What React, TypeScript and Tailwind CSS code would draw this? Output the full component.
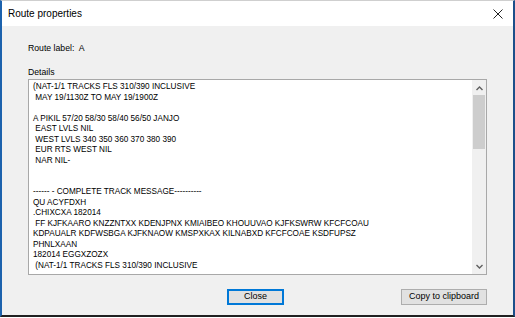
import React from "react";

const lines = [
  "(NAT-1/1 TRACKS FLS 310/390 INCLUSIVE",
  " MAY 19/1130Z TO MAY 19/1900Z",
  "",
  "A PIKIL 57/20 58/30 58/40 56/50 JANJO",
  " EAST LVLS NIL",
  " WEST LVLS 340 350 360 370 380 390",
  " EUR RTS WEST NIL",
  " NAR NIL-",
  "",
  "",
  "------ - COMPLETE TRACK MESSAGE----------",
  "QU ACYFDXH",
  ".CHIXCXA 182014",
  " FF KJFKAARO KNZZNTXX KDENJPNX KMIAIBEO KHOUUVAO KJFKSWRW KFCFCOAU",
  "KDPAUALR KDFWSBGA KJFKNAOW KMSPXKAX KILNABXD KFCFCOAE KSDFUPSZ",
  "PHNLXAAN",
  "182014 EGGXZOZX",
  " (NAT-1/1 TRACKS FLS 310/390 INCLUSIVE",
];

export default function App() {
  return (
    <div className="w-[515px] h-[318px] bg-white" style={{ fontFamily: '"Liberation Sans", Arial, sans-serif' }}>
      <div className="w-[515px] h-[317px] flex flex-col border-t border-t-[#cfcfcf] border-l-2 border-l-[#1c62ad] border-r-2 border-r-[#1c4f8a] border-b-2 border-b-[#202020] bg-[#f0f0f0]">
        {/* Title bar */}
        <div className="h-[25px] bg-white flex items-center justify-between pl-[6px] pr-[10px] shrink-0">
          <span className="text-[10px] text-[#000] leading-none">Route properties</span>
          <svg width="10" height="10" viewBox="0 0 10 10" className="mt-[1px]">
            <path d="M0.5 0.5 L9.5 9.5 M9.5 0.5 L0.5 9.5" stroke="#222" strokeWidth="1" />
          </svg>
        </div>
        {/* Content */}
        <div className="flex flex-col pl-[26px] pt-[17px]">
          <div className="text-[8.7px] leading-[11px] text-[#000] whitespace-pre">Route label:  A</div>
          <div className="text-[8.7px] leading-[11px] text-[#000] mt-[13px]">Details</div>
          <div className="mt-[1px] w-[459px] h-[196px] border border-[#a8a8a8] bg-white flex">
            <div className="flex-1 pl-[4px] pt-[2px] overflow-hidden">
              {lines.map((l, i) => (
                <div key={i} className="text-[8.2px] leading-[10.5px] h-[10.5px] text-[#000] whitespace-pre">
                  {l}
                </div>
              ))}
            </div>
            <div className="w-[14px] bg-[#f0f0f0] flex flex-col items-center shrink-0">
              <div className="h-[14px] flex items-center justify-center mt-[1px]">
                <svg width="7" height="5" viewBox="0 0 7 5">
                  <path d="M0.5 4 L3.5 1 L6.5 4" stroke="#606060" strokeWidth="1.4" fill="none" />
                </svg>
              </div>
              <div className="w-[12px] h-[54px] bg-[#cdcdcd]" />
              <div className="flex-1" />
              <div className="h-[14px] flex items-center justify-center mb-[1px]">
                <svg width="7" height="5" viewBox="0 0 7 5">
                  <path d="M0.5 1 L3.5 4 L6.5 1" stroke="#606060" strokeWidth="1.4" fill="none" />
                </svg>
              </div>
            </div>
          </div>
          {/* Buttons */}
          <div className="flex mt-[14px]">
            <div className="ml-[199px] w-[57px] h-[16px] bg-[#e1e1e1] border-2 border-[#0078d7] flex items-center justify-center text-[9px] text-[#000]">
              Close
            </div>
            <div className="ml-[117px] w-[86px] h-[16px] bg-[#e1e1e1] border border-[#adadad] flex items-center justify-center text-[9px] text-[#000]">
              Copy to clipboard
            </div>
          </div>
        </div>
      </div>
    </div>
  );
}
